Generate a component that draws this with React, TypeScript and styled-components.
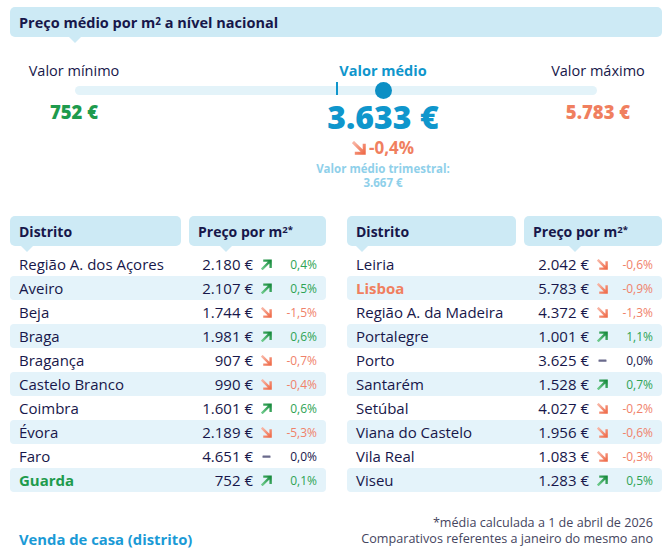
import React from "react";
import styled, { createGlobalStyle, css } from "styled-components";

const GlobalStyle = createGlobalStyle`
  html, body { margin: 0; padding: 0; background: #ffffff; }
  body { font-family: "Open Sans", "Noto Sans", sans-serif; color: #17174a; }
  * { box-sizing: border-box; }
`;

const NAVY = "#17174a";
const BLUE = "#0f96cc";
const GREEN = "#1e9b4d";
const ORANGE = "#f07f5f";

const Page = styled.div`
  width: 667px;
  height: 556px;
  padding: 7px 5px 0 10px;
  display: flex;
  flex-direction: column;
`;

const Pointer = css<{ $at: number }>`
  position: relative;
  &::after {
    content: "";
    position: absolute;
    left: ${(p) => p.$at - 6}px;
    bottom: -6px;
    width: 0;
    height: 0;
    border-left: 6px solid transparent;
    border-right: 6px solid transparent;
    border-top: 6px solid #cdeaf5;
  }
`;

const TitleBar = styled.div<{ $at: number }>`
  ${Pointer};
  height: 30px;
  background: #cdeaf5;
  border-radius: 5px;
  padding-left: 9px;
  display: flex;
  align-items: center;
  font-weight: 700;
  font-size: 14.5px;
  color: ${NAVY};
`;

const Sup = styled.sup`
  font-size: 0.68em;
  line-height: 0;
  position: relative;
  top: -0.1em;
`;

const Summary = styled.div`
  display: grid;
  grid-template-columns: 128px 130px 230px 50px 100px;
  margin-top: 24px;
`;

const Label = styled.div<{ $col: number; $accent?: boolean }>`
  grid-column: ${(p) => p.$col};
  grid-row: 1;
  text-align: center;
  font-size: 14.5px;
  line-height: 20px;
  white-space: nowrap;
  font-weight: ${(p) => (p.$accent ? 700 : 400)};
  color: ${(p) => (p.$accent ? BLUE : NAVY)};
`;

const Track = styled.div`
  grid-column: 1 / -1;
  grid-row: 2;
  position: relative;
  margin: 5px 0 0 65px;
  width: 522px;
  height: 9px;
  border-radius: 5px;
  background: #e3f3f9;
`;

const TrackMark = styled.div`
  position: absolute;
  left: 261px;
  top: -4px;
  width: 1.5px;
  height: 13px;
  background: ${BLUE};
`;

const TrackDot = styled.div`
  position: absolute;
  left: 300px;
  top: -4px;
  width: 17px;
  height: 17px;
  border-radius: 50%;
  background: #0c8fc4;
`;

const SideValue = styled.div<{ $col: number; $color: string }>`
  grid-column: ${(p) => p.$col};
  grid-row: 3;
  margin-top: 6px;
  text-align: center;
  font-weight: 800;
  font-size: 18.5px;
  line-height: 22px;
  color: ${(p) => p.$color};
  white-space: nowrap;
`;

const Middle = styled.div`
  grid-column: 3;
  grid-row: 3;
  display: flex;
  flex-direction: column;
  align-items: center;
  margin-top: 4px;
`;

const BigValue = styled.div`
  font-weight: 800;
  font-size: 32px;
  line-height: 36px;
  color: ${BLUE};
  white-space: nowrap;
`;

const Change = styled.div`
  margin-top: 3px;
  display: flex;
  align-items: center;
  gap: 3px;
  font-weight: 700;
  font-size: 17px;
  line-height: 20px;
  color: ${ORANGE};
`;

const Quarterly = styled.div`
  margin-top: 4px;
  text-align: center;
  font-weight: 700;
  font-size: 11.5px;
  line-height: 14px;
  color: #8fd0ea;
  white-space: nowrap;
`;

const Tables = styled.div`
  margin-top: 26px;
  display: grid;
  grid-template-columns: 316px 315px;
  column-gap: 21px;
`;

const Table = styled.div`
  display: flex;
  flex-direction: column;
`;

const HeadRow = styled.div<{ $split: number }>`
  display: grid;
  grid-template-columns: ${(p) => p.$split}px 1fr;
  column-gap: 8px;
  margin-bottom: 6px;
`;

const HeadCell = styled.div<{ $at: number }>`
  ${Pointer};
  height: 30px;
  background: #cdeaf5;
  border-radius: 5px;
  padding-left: 9px;
  display: flex;
  align-items: center;
  font-weight: 700;
  font-size: 14px;
  color: ${NAVY};
`;

const Row = styled.div<{ $shaded: boolean }>`
  display: grid;
  grid-template-columns: 1fr auto 11px 45px;
  align-items: center;
  height: 24px;
  padding: 0 9px;
  border-radius: 4px;
  background: ${(p) => (p.$shaded ? "#e4f3fa" : "transparent")};
`;

const Name = styled.div<{ $hl?: string }>`
  font-size: 15px;
  white-space: nowrap;
  font-weight: ${(p) => (p.$hl ? 700 : 400)};
  color: ${(p) => p.$hl || NAVY};
`;

const Price = styled.div`
  font-size: 15px;
  text-align: right;
  margin-right: 8px;
  white-space: nowrap;
  color: ${NAVY};
`;

const Pct = styled.div<{ $trend: Trend }>`
  font-size: 12px;
  text-align: right;
  color: ${(p) => (p.$trend === "up" ? "#2ea354" : p.$trend === "down" ? "#f0826a" : NAVY)};
`;

const Footer = styled.div`
  margin-top: 23px;
  display: flex;
  justify-content: space-between;
  align-items: flex-end;
  padding: 0 9px;
`;

const FooterTitle = styled.div`
  font-weight: 700;
  font-size: 14.8px;
  line-height: 16px;
  color: #1a9ad6;
`;

const Notes = styled.div`
  text-align: right;
  font-size: 12.6px;
  line-height: 16px;
  color: #45455e;
`;

type Trend = "up" | "down" | "flat";

const TrendIcon: React.FC<{ trend: Trend; size?: number; id: string }> = ({ trend, size = 11, id }) => {
  if (trend === "flat") {
    return (
      <svg width={size} height={size} viewBox="0 0 11 11">
        <rect x="1.5" y="4.5" width="8" height="2.2" rx="0.5" fill="#6a6a8c" />
      </svg>
    );
  }
  const up = trend === "up";
  const dark = up ? "#178a3c" : "#ef6c4a";
  const light = up ? "#6cc98a" : "#f8b3a2";
  return (
    <svg width={size} height={size} viewBox="0 0 11 11">
      <defs>
        <linearGradient id={id} x1="1" y1={up ? "0" : "1"} x2="0" y2={up ? "1" : "0"}>
          <stop offset="0" stopColor={dark} />
          <stop offset="1" stopColor={light} />
        </linearGradient>
      </defs>
      {up ? (
        <path d="M1.6 9.6 L8.6 2.6 M3.4 1.6 H9.6 V7.8" stroke={`url(#${id})`} strokeWidth="2.4" fill="none" strokeLinecap="square" />
      ) : (
        <path d="M1.6 1.6 L8.6 8.6 M3.4 9.6 H9.6 V3.4" stroke={`url(#${id})`} strokeWidth="2.4" fill="none" strokeLinecap="square" />
      )}
    </svg>
  );
};

type Item = { name: string; price: string; trend: Trend; pct: string; hl?: string };

const left: Item[] = [
  { name: "Região A. dos Açores", price: "2.180 €", trend: "up", pct: "0,4%" },
  { name: "Aveiro", price: "2.107 €", trend: "up", pct: "0,5%" },
  { name: "Beja", price: "1.744 €", trend: "down", pct: "-1,5%" },
  { name: "Braga", price: "1.981 €", trend: "up", pct: "0,6%" },
  { name: "Bragança", price: "907 €", trend: "down", pct: "-0,7%" },
  { name: "Castelo Branco", price: "990 €", trend: "down", pct: "-0,4%" },
  { name: "Coimbra", price: "1.601 €", trend: "up", pct: "0,6%" },
  { name: "Évora", price: "2.189 €", trend: "down", pct: "-5,3%" },
  { name: "Faro", price: "4.651 €", trend: "flat", pct: "0,0%" },
  { name: "Guarda", price: "752 €", trend: "up", pct: "0,1%", hl: GREEN },
];

const right: Item[] = [
  { name: "Leiria", price: "2.042 €", trend: "down", pct: "-0,6%" },
  { name: "Lisboa", price: "5.783 €", trend: "down", pct: "-0,9%", hl: ORANGE },
  { name: "Região A. da Madeira", price: "4.372 €", trend: "down", pct: "-1,3%" },
  { name: "Portalegre", price: "1.001 €", trend: "up", pct: "1,1%" },
  { name: "Porto", price: "3.625 €", trend: "flat", pct: "0,0%" },
  { name: "Santarém", price: "1.528 €", trend: "up", pct: "0,7%" },
  { name: "Setúbal", price: "4.027 €", trend: "down", pct: "-0,2%" },
  { name: "Viana do Castelo", price: "1.956 €", trend: "down", pct: "-0,6%" },
  { name: "Vila Real", price: "1.083 €", trend: "down", pct: "-0,3%" },
  { name: "Viseu", price: "1.283 €", trend: "up", pct: "0,5%" },
];

const DistrictTable: React.FC<{ items: Item[]; split: number; p1: number; p2: number; key2: string }> = ({ items, split, p1, p2, key2 }) => (
  <Table>
    <HeadRow $split={split}>
      <HeadCell $at={p1}>Distrito</HeadCell>
      <HeadCell $at={p2}>
        Preço por m<Sup>2*</Sup>
      </HeadCell>
    </HeadRow>
    {items.map((it, i) => (
      <Row key={it.name} $shaded={i % 2 === 1}>
        <Name $hl={it.hl}>{it.name}</Name>
        <Price>{it.price}</Price>
        <TrendIcon trend={it.trend} id={`${key2}-${i}`} />
        <Pct $trend={it.trend}>{it.pct}</Pct>
      </Row>
    ))}
  </Table>
);

export default function App() {
  return (
    <>
      <GlobalStyle />
      <Page>
        <TitleBar $at={65}>
          Preço médio por m<Sup>2</Sup>&nbsp;a nível nacional
        </TitleBar>
        <Summary>
          <Label $col={1}>Valor mínimo</Label>
          <Label $col={3} $accent>
            Valor médio
          </Label>
          <Label $col={5}>Valor máximo</Label>
          <Track>
            <TrackMark />
            <TrackDot />
          </Track>
          <SideValue $col={1} $color={GREEN}>
            752 €
          </SideValue>
          <Middle>
            <BigValue>3.633 €</BigValue>
            <Change>
              <TrendIcon trend="down" size={14} id="main-change" />
              -0,4%
            </Change>
            <Quarterly>
              Valor médio trimestral:
              <br />
              3.667 €
            </Quarterly>
          </Middle>
          <SideValue $col={5} $color={ORANGE}>
            5.783 €
          </SideValue>
        </Summary>
        <Tables>
          <DistrictTable items={left} split={171} p1={17} p2={37} key2="l" />
          <DistrictTable items={right} split={169} p1={15} p2={51} key2="r" />
        </Tables>
        <Footer>
          <FooterTitle>Venda de casa (distrito)</FooterTitle>
          <Notes>
            *média calculada a 1 de abril de 2026
            <br />
            Comparativos referentes a janeiro do mesmo ano
          </Notes>
        </Footer>
      </Page>
    </>
  );
}
